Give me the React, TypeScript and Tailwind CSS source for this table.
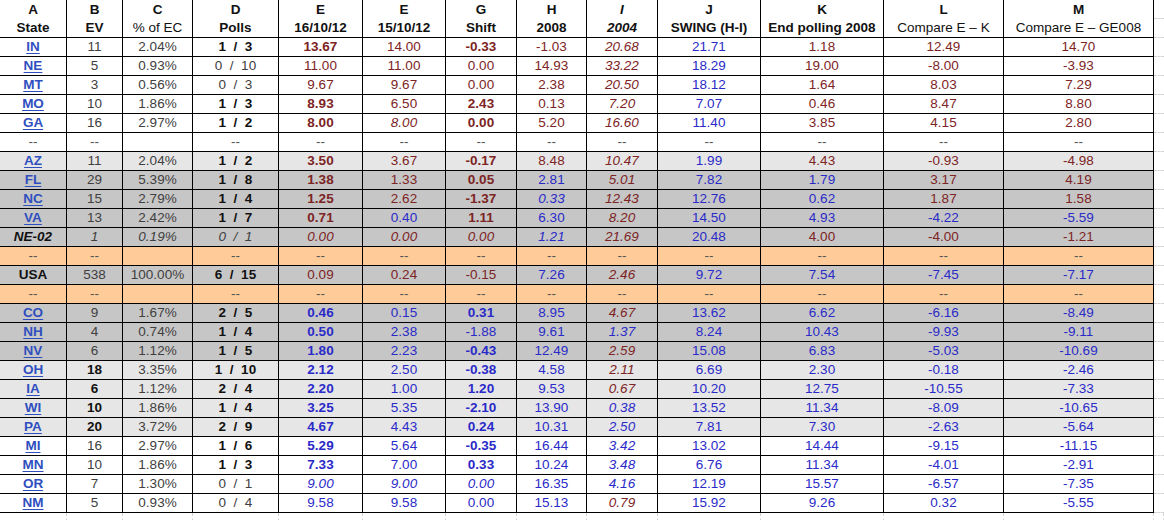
const GRID =
  "grid grid-cols-[67px_56px_70px_86px_84px_83px_71px_70px_71px_103px_123px_120px_150px_10px] auto-rows-[19px]";

const BG: Record<string, string> = {
  w: "bg-white",
  l: "bg-[#e6e6e6]",
  d: "bg-[#c6c6c6]",
  o: "bg-[#ffcc99]",
};

const COLOR: Record<string, string> = {
  r: "text-[#7d2424]",
  u: "text-[#2a2ac8]",
  k: "text-[#111111]",
  g: "text-[#404040]",
  d: "text-[#555555]",
  l: "text-[#2f4fbf] underline underline-offset-2 font-bold",
};

interface Row {
  bg: string;
  cells: string[];
}

const dash = (bg: string): Row => ({
  bg,
  cells: ["--~d", "--~d", "", "--~d", "--~d", "--~d", "--~d", "--~d", "--~d", "--~d", "--~d", "--~d", "--~d"],
});

const rows: Row[] = [
  {
    bg: "w",
    cells: ["A~kb", "B~kb", "C~kb", "D~kb", "E~kb", "E~kb", "G~kb", "H~kb", "I~kbi", "J~kb", "K~kb", "L~kb", "M~kb"],
  },
  {
    bg: "w",
    cells: [
      "State~kb", "EV~kb", "% of EC~k", "Polls~kb", "16/10/12~kb", "15/10/12~kb", "Shift~kb", "2008~kb",
      "2004~kbi", "SWING (H-I)~kb", "End polling 2008~kb", "Compare E – K~k", "Compare E – GE008~k",
    ],
  },
  { bg: "w", cells: ["IN~l", "11", "2.04%", "1  /  3~kb", "13.67~rb", "14.00~r", "-0.33~rb", "-1.03~r", "20.68~ri", "21.71~u", "1.18~r", "12.49~r", "14.70~r"] },
  { bg: "w", cells: ["NE~l", "5", "0.93%", "0  /  10~g", "11.00~r", "11.00~r", "0.00~r", "14.93~r", "33.22~ri", "18.29~u", "19.00~r", "-8.00~r", "-3.93~r"] },
  { bg: "w", cells: ["MT~l", "3", "0.56%", "0  /  3~g", "9.67~r", "9.67~r", "0.00~r", "2.38~r", "20.50~ri", "18.12~u", "1.64~r", "8.03~r", "7.29~r"] },
  { bg: "w", cells: ["MO~l", "10", "1.86%", "1  /  3~kb", "8.93~rb", "6.50~r", "2.43~rb", "0.13~r", "7.20~ri", "7.07~u", "0.46~r", "8.47~r", "8.80~r"] },
  { bg: "w", cells: ["GA~l", "16", "2.97%", "1  /  2~kb", "8.00~rb", "8.00~ri", "0.00~rb", "5.20~r", "16.60~ri", "11.40~u", "3.85~r", "4.15~r", "2.80~r"] },
  dash("w"),
  { bg: "l", cells: ["AZ~l", "11", "2.04%", "1  /  2~kb", "3.50~rb", "3.67~r", "-0.17~rb", "8.48~r", "10.47~ri", "1.99~u", "4.43~r", "-0.93~r", "-4.98~r"] },
  { bg: "d", cells: ["FL~l", "29", "5.39%", "1  /  8~kb", "1.38~rb", "1.33~r", "0.05~rb", "2.81~u", "5.01~ri", "7.82~u", "1.79~u", "3.17~r", "4.19~r"] },
  { bg: "d", cells: ["NC~l", "15", "2.79%", "1  /  4~kb", "1.25~rb", "2.62~r", "-1.37~rb", "0.33~ui", "12.43~ri", "12.76~u", "0.62~u", "1.87~r", "1.58~r"] },
  { bg: "d", cells: ["VA~l", "13", "2.42%", "1  /  7~kb", "0.71~rb", "0.40~u", "1.11~rb", "6.30~u", "8.20~ri", "14.50~u", "4.93~u", "-4.22~u", "-5.59~u"] },
  { bg: "d", cells: ["NE-02~kbi", "1~gi", "0.19%~gi", "0  /  1~gi", "0.00~ri", "0.00~ri", "0.00~ri", "1.21~ui", "21.69~ri", "20.48~u", "4.00~r", "-4.00~r", "-1.21~r"] },
  dash("o"),
  { bg: "d", cells: ["USA~kb", "538", "100.00%", "6  /  15~kb", "0.09~r", "0.24~r", "-0.15~r", "7.26~u", "2.46~ri", "9.72~u", "7.54~u", "-7.45~u", "-7.17~u"] },
  dash("o"),
  { bg: "d", cells: ["CO~l", "9", "1.67%", "2  /  5~kb", "0.46~ub", "0.15~u", "0.31~ub", "8.95~u", "4.67~ri", "13.62~u", "6.62~u", "-6.16~u", "-8.49~u"] },
  { bg: "d", cells: ["NH~l", "4", "0.74%", "1  /  4~kb", "0.50~ub", "2.38~u", "-1.88~u", "9.61~u", "1.37~ui", "8.24~u", "10.43~u", "-9.93~u", "-9.11~u"] },
  { bg: "d", cells: ["NV~l", "6", "1.12%", "1  /  5~kb", "1.80~ub", "2.23~u", "-0.43~ub", "12.49~u", "2.59~ri", "15.08~u", "6.83~u", "-5.03~u", "-10.69~u"] },
  { bg: "l", cells: ["OH~l", "18~kb", "3.35%", "1  /  10~kb", "2.12~ub", "2.50~u", "-0.38~ub", "4.58~u", "2.11~ri", "6.69~u", "2.30~u", "-0.18~u", "-2.46~u"] },
  { bg: "l", cells: ["IA~l", "6~kb", "1.12%", "2  /  4~kb", "2.20~ub", "1.00~u", "1.20~ub", "9.53~u", "0.67~ri", "10.20~u", "12.75~u", "-10.55~u", "-7.33~u"] },
  { bg: "l", cells: ["WI~l", "10~kb", "1.86%", "1  /  4~kb", "3.25~ub", "5.35~u", "-2.10~ub", "13.90~u", "0.38~ui", "13.52~u", "11.34~u", "-8.09~u", "-10.65~u"] },
  { bg: "l", cells: ["PA~l", "20~kb", "3.72%", "2  /  9~kb", "4.67~ub", "4.43~u", "0.24~ub", "10.31~u", "2.50~ui", "7.81~u", "7.30~u", "-2.63~u", "-5.64~u"] },
  { bg: "w", cells: ["MI~l", "16", "2.97%", "1  /  6~kb", "5.29~ub", "5.64~u", "-0.35~ub", "16.44~u", "3.42~ui", "13.02~u", "14.44~u", "-9.15~u", "-11.15~u"] },
  { bg: "w", cells: ["MN~l", "10", "1.86%", "1  /  3~kb", "7.33~ub", "7.00~u", "0.33~ub", "10.24~u", "3.48~ui", "6.76~u", "11.34~u", "-4.01~u", "-2.91~u"] },
  { bg: "w", cells: ["OR~l", "7", "1.30%", "0  /  1~g", "9.00~ui", "9.00~ui", "0.00~ui", "16.35~u", "4.16~ui", "12.19~u", "15.57~u", "-6.57~u", "-7.35~u"] },
  { bg: "w", cells: ["NM~l", "5", "0.93%", "0  /  4~g", "9.58~u", "9.58~u", "0.00~u", "15.13~u", "0.79~ri", "15.92~u", "9.26~u", "0.32~u", "-5.55~u"] },
];

function Cell({ spec, bg, bottom }: { spec: string; bg: string; bottom: boolean }) {
  const [text, flags = "g"] = spec.split("~");
  const colorKey = flags.split("").find((f) => f in COLOR) ?? "g";
  return (
    <div
      className={[
        "flex items-center justify-center whitespace-pre leading-none border-r border-black",
        bottom ? "border-b" : "",
        BG[bg],
        COLOR[colorKey],
        flags.includes("b") ? "font-bold" : "",
        flags.includes("i") ? "italic" : "",
      ].join(" ")}
    >
      {text}
    </div>
  );
}

export default function App() {
  return (
    <div className="h-[520px] w-[1164px] overflow-hidden bg-white font-['Liberation_Sans',Arial,sans-serif] text-[13.5px]">
      <div className={GRID}>
        {rows.map((row, ri) => (
          <div key={ri} className="contents">
            {row.cells.map((spec, ci) => (
              <Cell key={ci} spec={spec} bg={row.bg} bottom={ri !== 0} />
            ))}
            <div className="border-b border-dashed border-[#d4d4d4] bg-white" />
          </div>
        ))}
        {Array.from({ length: 14 }).map((_, i) => (
          <div key={i} className="border-r border-dashed border-[#d4d4d4] bg-white" />
        ))}
      </div>
    </div>
  );
}
